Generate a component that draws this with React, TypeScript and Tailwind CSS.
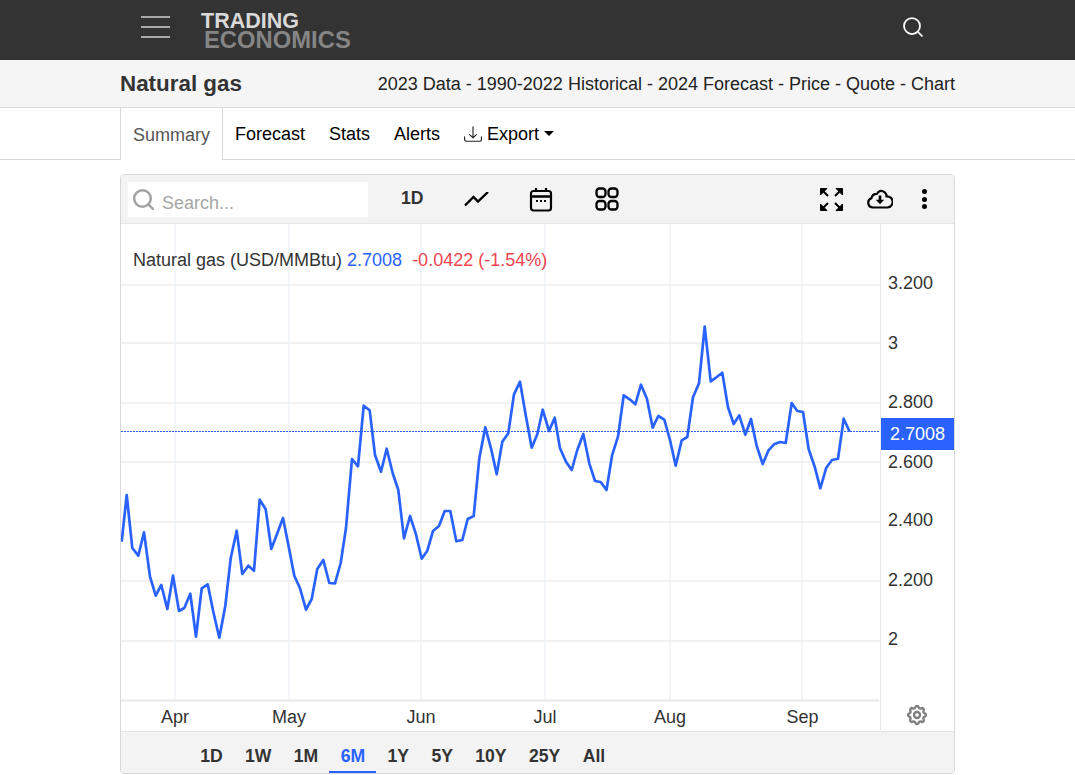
import { Search } from 'lucide-react';
import { BsDownload } from 'react-icons/bs';
import { HiOutlineCog } from 'react-icons/hi';

const font = 'font-["Liberation_Sans",Arial,sans-serif]';

const points =
  '121.7,541.7 126.7,495 132.3,548 138.3,555.7 144,532.3 150,576.7 155.7,595.7 161.3,585 167.3,609 173,575.7 179,611 184.3,608 190.3,593.7 196,636.7 201.7,588.3 207.7,584.3 213.3,611.7 219.3,637.7 225.3,606 230.7,558.3 236.7,530.7 242.3,574 248.3,565.7 254,570.7 259.7,499.7 265.7,509.3 271.3,549 277.3,533.3 283,518 288.7,546.7 294.3,575.7 300,588.3 306,609.7 311.7,599 317.3,569 323.3,560 329.3,583 335,583.3 340.7,563 346,528 352,459 358,466.3 363.7,405.7 369.7,410.3 375,455 381,471.7 386.7,448.7 392.7,473.3 398.3,490 404,538.3 410,516 415.7,533.3 421.7,558.7 427.3,550.7 433,531 439,526 444.7,511 450.3,511 456.3,541.3 462.3,540 467.7,519 473.7,516 479.3,458.3 485.3,427.3 491,448.3 496.7,474.3 502.3,441.7 508.3,433.3 514,394.3 520,381.7 525.7,415 531.7,447.7 537.3,434.3 542.7,409.7 549,431 554.7,417.7 560,448.3 566,461.7 571.7,470 577.3,450 583.3,434 589.3,463.3 595,481 600.7,482 606.5,490 612,455.7 618,436.7 623.7,395.3 629.7,399.3 635.3,404.3 641,384.7 647,399 652.7,427.7 658.3,416 664.3,419.7 670,440 675.7,465.7 681.7,440.3 687.3,437 693,397.3 699,383.3 704.7,326.7 710.7,381.3 716.3,377.3 722.3,372.7 728,407.3 733.7,424 739.3,415.3 745.3,434.7 751,419 756.7,446 762.7,464 768.3,450.7 774,444.3 780,442 785.7,443 791.7,403 797.3,411 803,412 808.7,449.3 814.7,466.7 820.3,488.3 826.3,467.7 832,460 838,458.7 843.7,418.7 849.7,431.7';

const gridY = [285, 343, 403, 462, 522, 581, 641];
const gridX = [175, 289, 421, 545, 670, 802];
const yLabels = [
  { y: 283, text: '3.200' },
  { y: 343, text: '3' },
  { y: 402, text: '2.800' },
  { y: 462, text: '2.600' },
  { y: 520, text: '2.400' },
  { y: 580, text: '2.200' },
  { y: 639, text: '2' }
];
const months = [
  { x: 175, text: 'Apr' },
  { x: 289, text: 'May' },
  { x: 421, text: 'Jun' },
  { x: 545, text: 'Jul' },
  { x: 670, text: 'Aug' },
  { x: 802.5, text: 'Sep' }
];
const ranges = ['1D', '1W', '1M', '6M', '1Y', '5Y', '10Y', '25Y', 'All'];
const tabs = ['Forecast', 'Stats', 'Alerts'];

function Header() {
  return (
    <header className="flex h-[60px] shrink-0 items-center bg-[#333333] pl-[141px] pr-[150px]">
      <div className="mb-[6px] flex w-[29px] flex-col gap-[7.5px]">
        <span className="h-[2.5px] bg-[#a9a9a9]" />
        <span className="h-[2.5px] bg-[#a9a9a9]" />
        <span className="h-[2.5px] bg-[#a9a9a9]" />
      </div>
      <div className="ml-[31px] flex flex-col pt-[1px] font-bold">
        <span className="h-[18px] text-[21.5px] leading-[18px] text-[#d9d9d9]">TRADING</span>
        <span className="ml-[3px] h-[20px] text-[23.8px] leading-[20px] text-[#858585]">ECONOMICS</span>
      </div>
      <Search className="mb-[6px] ml-auto text-white" size={24} strokeWidth={1.75} />
    </header>
  );
}

function TitleBar() {
  return (
    <div className="flex h-[48px] shrink-0 items-center justify-between border-b border-[#d8d8d8] bg-[#f5f5f5] pl-[120px] pr-[120px]">
      <h1 className="text-[22.4px] font-bold text-[#333333]">Natural gas</h1>
      <p className="pt-[1px] text-[18px] text-[#222222]">2023 Data - 1990-2022 Historical - 2024 Forecast - Price - Quote - Chart</p>
    </div>
  );
}

function Tabs() {
  return (
    <nav className="flex h-[52px] shrink-0 border-b border-[#d8d8d8] pl-[120px] text-[18px] text-black">
      <div className="-mb-px flex items-center border-x border-[#d8d8d8] bg-white px-3 pt-[2px] text-[#555555]">Summary</div>
      {tabs.map((tab) => (
        <div key={tab} className="flex items-center px-3 pt-[2px]">
          {tab}
        </div>
      ))}
      <div className="flex items-center px-3 pt-[2px]">
        <BsDownload size={18} className="mb-[1px] mr-[5px] text-[#222222]" />
        Export
        <span className="mb-[3px] ml-[5px] h-0 w-0 border-x-[5px] border-t-[5px] border-x-transparent border-t-black" />
      </div>
    </nav>
  );
}

function CalendarIcon() {
  return (
    <svg width="24" height="25" viewBox="0 0 24 25" fill="none" stroke="black" strokeWidth="2.2">
      <rect x="2" y="4" width="20" height="19.5" rx="2.5" />
      <path d="M2 9.5h20" strokeWidth="2.6" />
      <path d="M7 1v4M17 1v4" />
      <path d="M7 14h2M11 14h2M15 14h2" strokeWidth="1.8" />
    </svg>
  );
}

function GridIcon() {
  return (
    <svg width="24" height="24" viewBox="0 0 24 24" fill="none" stroke="black" strokeWidth="2.3">
      <rect x="1.5" y="1.5" width="9" height="8.5" rx="3" />
      <rect x="13.5" y="1.5" width="9" height="8.5" rx="3" />
      <rect x="1.5" y="14" width="9" height="8.5" rx="3" />
      <rect x="13.5" y="14" width="9" height="8.5" rx="3" />
    </svg>
  );
}

function ExpandIcon() {
  return (
    <svg width="23" height="23" viewBox="0 0 23 23" fill="black" stroke="black">
      <path d="M0.5 0.5h6.5l-6.5 6.5z" />
      <path d="M22.5 0.5h-6.5l6.5 6.5z" />
      <path d="M0.5 22.5h6.5l-6.5 -6.5z" />
      <path d="M22.5 22.5h-6.5l6.5 -6.5z" />
      <path d="M2 2l6 6M21 2l-6 6M2 21l6 -6M21 21l-6 -6" strokeWidth="2" />
    </svg>
  );
}

function CloudIcon() {
  return (
    <svg width="26" height="20" viewBox="0 0 26 20" fill="none" stroke="black" strokeWidth="2.2">
      <path d="M6 18.5a4.8 4.8 0 0 1-1.6-9.3 5.6 5.6 0 0 1 5.6-4.4 7 7 0 0 1 3.6-3 6 6 0 0 1 6 5.6 5.5 5.5 0 0 1 1 11.1z" />
      <path d="M13 6.5v6" strokeWidth="2.6" />
      <path d="M8.8 10.8h8.4l-4.2 4.4z" fill="black" stroke="none" />
    </svg>
  );
}

function Toolbar() {
  return (
    <div className="flex h-[49px] items-center border-b border-[#e6e6e6] bg-[#f3f3f3] pl-[7px]">
      <div className="mt-[1px] flex h-[35px] w-[240px] items-center bg-white pl-[3px]">
        <Search size={25} strokeWidth={2.4} className="text-[#a3a3a3]" />
        <span className="ml-[6px] mt-[8px] text-[18px] text-[#a6a6a6]">Search...</span>
      </div>
      <div className="mb-[1px] ml-[12px] flex w-[64.5px] justify-center text-[17.6px] font-bold text-[#333333]">1D</div>
      <div className="flex w-[64.5px] justify-center">
        <svg width="25" height="15" viewBox="0 0 25 15" fill="none" stroke="black" strokeWidth="2.4">
          <path d="M1 13.5l8.5-8.5 4.5 4.5 10-9.5" />
        </svg>
      </div>
      <div className="flex w-[64.5px] justify-center">
        <CalendarIcon />
      </div>
      <div className="ml-[1px] flex w-[64.5px] justify-center">
        <GridIcon />
      </div>
      <div className="ml-auto flex items-center pr-[10.5px]">
        <div className="flex w-[49px] justify-center">
          <ExpandIcon />
        </div>
        <div className="flex w-[49px] justify-center">
          <CloudIcon />
        </div>
        <div className="flex w-[39px] flex-col items-center gap-[2.5px]">
          <span className="h-[5px] w-[5px] rounded-full bg-black" />
          <span className="h-[5px] w-[5px] rounded-full bg-black" />
          <span className="h-[5px] w-[5px] rounded-full bg-black" />
        </div>
      </div>
    </div>
  );
}

function Chart() {
  return (
    <div className="relative h-[507px]">
      <svg width="833" height="507" viewBox="121 224 833 507" className="block">
        {gridX.map((x) => (
          <line key={x} x1={x} x2={x} y1={224} y2={700} stroke="#eef3f7" strokeWidth="1.5" />
        ))}
        {gridY.map((y) => (
          <line key={y} x1={121} x2={880} y1={y} y2={y} stroke="#ececec" strokeWidth="1.5" />
        ))}
        <line x1={121} x2={879} y1={700.5} y2={700.5} stroke="#e8e8e8" strokeWidth="2" />
        <line x1={880.5} x2={880.5} y1={224} y2={730} stroke="#e8e8e8" />
        <line x1={121} x2={880} y1={431.5} y2={431.5} stroke="#2962ff" strokeDasharray="2 1" />
        <polyline points={points} fill="none" stroke="#2962ff" strokeWidth="2.7" strokeLinejoin="round" />
        {yLabels.map((l) => (
          <text key={l.text} x={888} y={l.y + 6} fontSize="18" fill="#333333">
            {l.text}
          </text>
        ))}
        {months.map((m) => (
          <text key={m.text} x={m.x} y={723} fontSize="18" fill="#333333" textAnchor="middle">
            {m.text}
          </text>
        ))}
      </svg>
      <div className="absolute left-[12px] top-[25px] flex text-[18px] leading-[22px]">
        <span className="text-[#333333]">Natural gas (USD/MMBtu)</span>
        <span className="ml-[5px] text-[#2962ff]">2.7008</span>
        <span className="ml-[10px] text-[#f0444f]">-0.0422 (-1.54%)</span>
      </div>
      <div className="absolute right-0 top-[194px] flex h-[32px] w-[73px] items-center justify-center bg-[#2962ff] pt-[1px] text-[18px] text-white">
        2.7008
      </div>
      <HiOutlineCog size={24} className="absolute left-[784px] top-[479px] text-[#808080] [&_path]:stroke-[2.4]" />
    </div>
  );
}

function RangeBar() {
  return (
    <div className="flex h-[42px] border-t border-[#e6e6e6] bg-[#f3f3f3] pl-[68px] text-[17.6px] font-bold text-[#333333]">
      {ranges.map((range) => (
        <div
          key={range}
          className={
            range === '6M'
              ? 'flex items-center border-b-2 border-[#2962ff] px-[11.2px] pt-[9px] text-[#2962ff]'
              : 'flex items-center border-b-2 border-transparent px-[11.2px] pt-[9px]'
          }
        >
          {range}
        </div>
      ))}
    </div>
  );
}

export default function App() {
  return (
    <div className={`flex h-[775px] flex-col overflow-hidden bg-white ${font}`}>
      <Header />
      <TitleBar />
      <Tabs />
      <main className="px-[120px] pt-[14px]">
        <div className="overflow-hidden rounded border border-[#d8d8d8]">
          <Toolbar />
          <Chart />
          <RangeBar />
        </div>
      </main>
    </div>
  );
}
